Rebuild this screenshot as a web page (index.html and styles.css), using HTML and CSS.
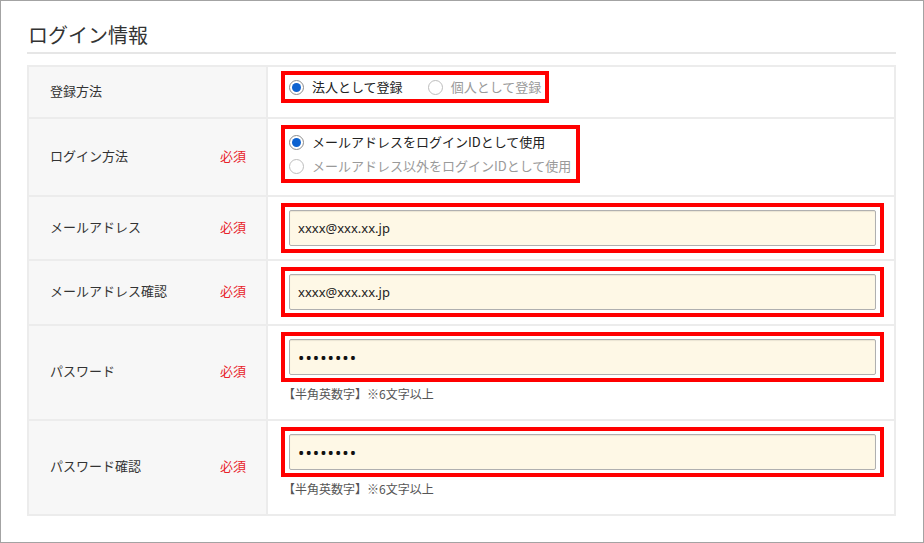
FILE: index.html
```html
<!DOCTYPE html>
<html lang="ja">
<head>
    <meta charset="UTF-8">
    <meta name="viewport" content="width=device-width, initial-scale=1.0">
    <title>ログイン情報</title>
    <link rel="stylesheet" href="styles.css">
</head>
<body>

    <div class="frame">
        <h2 class="section-title">ログイン情報</h2>

        <div class="form-table">
            <div class="form-row row-type">
                <div class="form-label"><span>登録方法</span></div>
                <div class="form-value">
                    <div class="mark mark-inline">
                        <label class="choice"><input type="radio" name="type" checked> 法人として登録</label>
                        <label class="choice choice-off"><input type="radio" name="type"> 個人として登録</label>
                    </div>
                </div>
            </div>

            <div class="form-row row-login">
                <div class="form-label"><span>ログイン方法</span><span class="required">必須</span></div>
                <div class="form-value">
                    <div class="mark mark-stack">
                        <label class="choice"><input type="radio" name="login" checked> メールアドレスをログインIDとして使用</label>
                        <label class="choice choice-off"><input type="radio" name="login"> メールアドレス以外をログインIDとして使用</label>
                    </div>
                </div>
            </div>

            <div class="form-row row-field">
                <div class="form-label"><span>メールアドレス</span><span class="required">必須</span></div>
                <div class="form-value">
                    <div class="mark mark-field">
                        <input class="text-input" type="text" value="xxxx@xxx.xx.jp">
                    </div>
                </div>
            </div>

            <div class="form-row row-field row-field-b">
                <div class="form-label"><span>メールアドレス確認</span><span class="required">必須</span></div>
                <div class="form-value">
                    <div class="mark mark-field">
                        <input class="text-input" type="text" value="xxxx@xxx.xx.jp">
                    </div>
                </div>
            </div>

            <div class="form-row row-help">
                <div class="form-label"><span>パスワード</span><span class="required">必須</span></div>
                <div class="form-value">
                    <div class="mark mark-field">
                        <input class="text-input pass-input" type="password" value="password">
                    </div>
                    <p class="help">【半角英数字】※6文字以上</p>
                </div>
            </div>

            <div class="form-row row-help">
                <div class="form-label"><span>パスワード確認</span><span class="required">必須</span></div>
                <div class="form-value">
                    <div class="mark mark-field">
                        <input class="text-input pass-input" type="password" value="password">
                    </div>
                    <p class="help">【半角英数字】※6文字以上</p>
                </div>
            </div>
        </div>
    </div>

</body>
</html>
```

FILE: styles.css
```css
body {
    margin: 0;
    font-family: "Noto Sans CJK JP", "Noto Sans", sans-serif;
    color: #333;
    background: #fff;
}
.frame {
    width: 924px;
    height: 543px;
    box-sizing: border-box;
    border: 1px solid #a3a3a3;
    padding: 19px 27px 0 26px;
}
.section-title {
    margin: 0 0 11px;
    padding: 0 0 2px 1px;
    font-size: 20px;
    line-height: 30px;
    font-weight: normal;
    color: #333;
    border-bottom: 2px solid #e6e6e6;
}
.form-table {
    border: 2px solid #ececec;
    border-bottom: none;
}
.form-row {
    display: flex;
    border-bottom: 2px solid #ececec;
}
.form-label {
    width: 239px;
    box-sizing: border-box;
    flex-shrink: 0;
    display: flex;
    align-items: center;
    justify-content: space-between;
    padding: 0 20px 4px 21px;
    background: #f7f7f7;
    border-right: 2px solid #ececec;
    font-size: 13px;
    color: #333;
}
.required {
    color: #e8232a;
}
.form-value {
    flex: 1;
    padding: 6px 10px 6px 13px;
}
.row-type .form-value {
    padding-top: 4px;
    padding-bottom: 14px;
}
.row-login .form-value {
    padding-bottom: 12px;
}
.row-field-b .form-value {
    padding-bottom: 7px;
}
.row-help .form-value {
    padding-bottom: 17px;
}

/* red annotation boxes */
.mark {
    border: 4px solid #ff0000;
}
.mark-inline {
    display: inline-flex;
    align-items: center;
    gap: 25px;
    padding: 0 4px;
    height: 24px;
}
.mark-stack {
    display: inline-flex;
    flex-direction: column;
    padding: 1px 5px 1px 4px;
}
.mark-field {
    padding: 3px 4px;
}

.choice {
    display: flex;
    align-items: center;
    font-size: 13px;
    line-height: 24px;
    color: #222;
    white-space: nowrap;
}
.choice-off {
    color: #9a9a9a;
}
.choice input {
    appearance: none;
    width: 15px;
    height: 15px;
    margin: 0 8px 0 0;
    border: 1px solid #8c8c8c;
    border-radius: 50%;
    background: #fff;
    box-sizing: border-box;
    display: grid;
    place-content: center;
}
.choice-off input {
    border-color: #bdbdbd;
}
.choice input:checked::after {
    content: "";
    width: 9px;
    height: 9px;
    border-radius: 50%;
    background: #0d62d0;
}

.text-input {
    display: block;
    width: 100%;
    height: 36px;
    box-sizing: border-box;
    padding: 0 8px;
    font-family: "Noto Sans", "Noto Sans CJK JP", sans-serif;
    font-size: 13px;
    color: #222;
    background: #fef8e6;
    border: 1px solid #b0b0b0;
    border-radius: 2px;
    box-shadow: inset 0 1px 1px rgba(0, 0, 0, 0.08);
}
.pass-input {
    font-size: 17px;
    letter-spacing: 1px;
    color: #111;
}
.help {
    margin: 4px 0 0;
    padding-left: 2px;
    font-size: 12px;
    line-height: 16px;
    color: #555;
}
```
